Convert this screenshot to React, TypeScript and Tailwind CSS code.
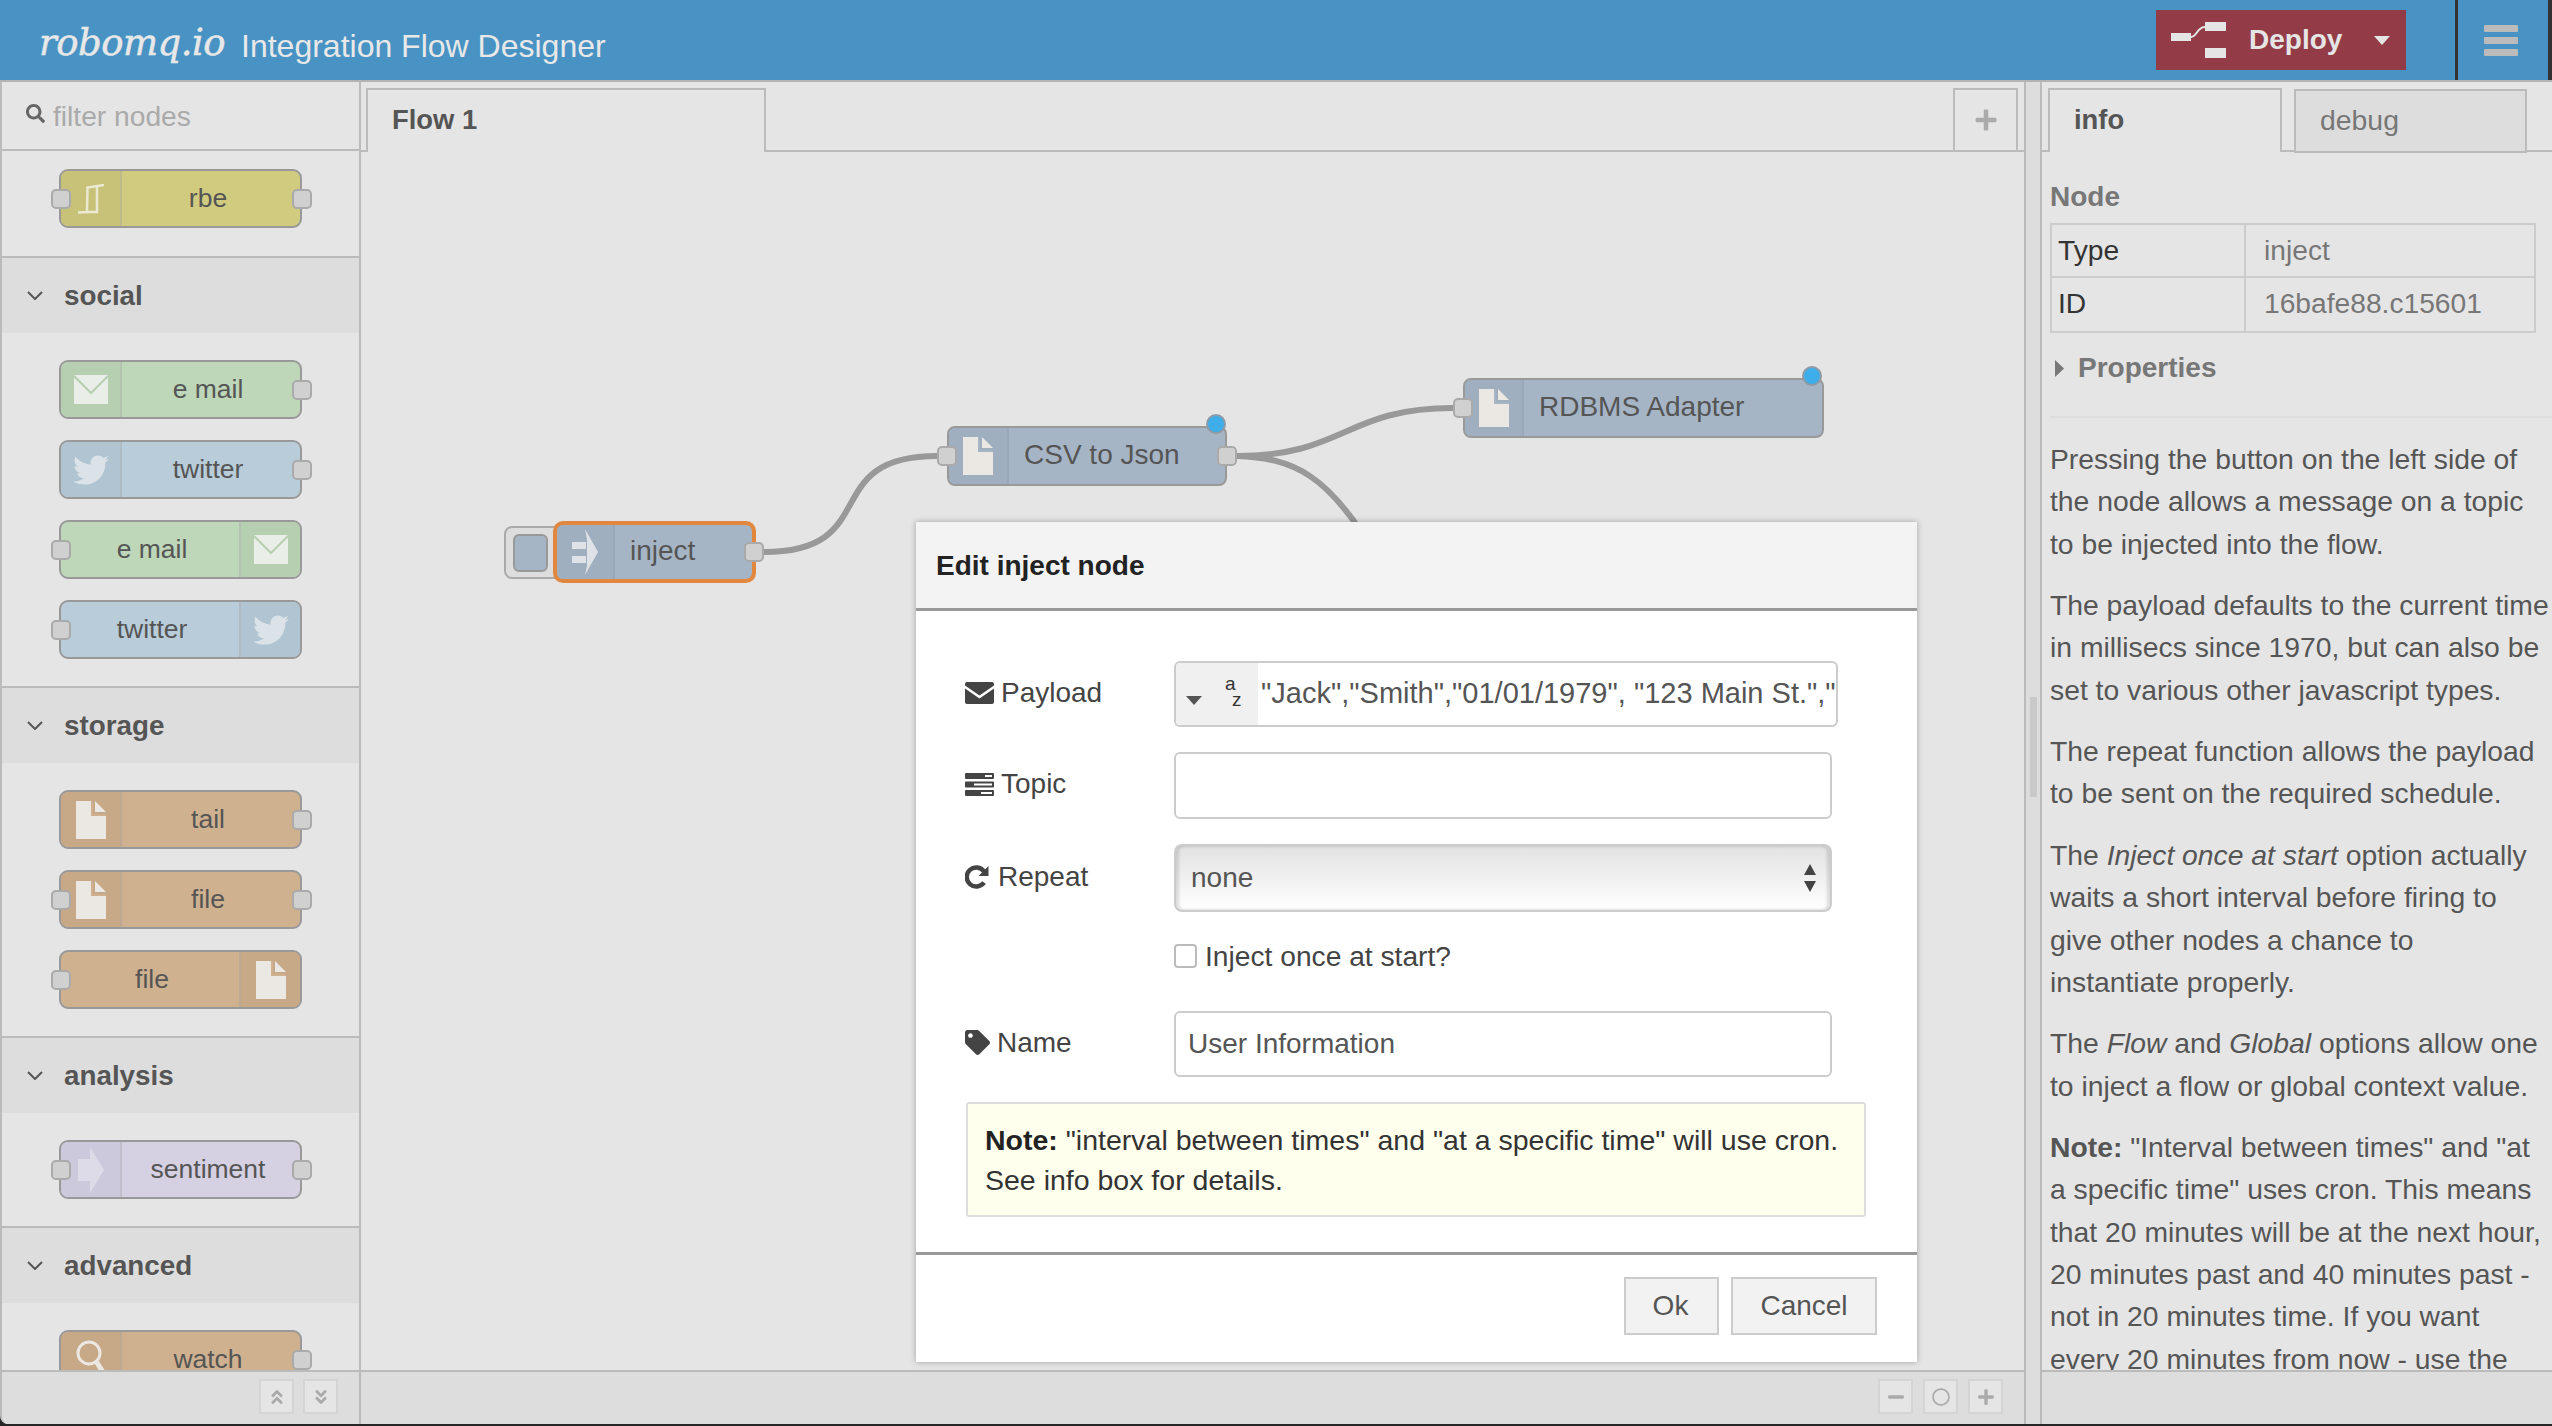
import type { ReactNode } from 'react';
import { FaTag, FaSearch, FaTwitter, FaPlus, FaMinus, FaRegCircle, FaAngleDoubleUp, FaAngleDoubleDown } from 'react-icons/fa';

function MailIcon({ line }: { line: string }) {
  return (
    <svg viewBox="0 0 34 29" className="w-[34px] h-[29px]">
      <rect width="34" height="29" fill="#eaeee8" />
      <path d="M0 1 L17 18 L34 1" fill="none" stroke={line} strokeWidth="2" />
    </svg>
  );
}

function FileIcon({ fold }: { fold: string }) {
  return (
    <svg viewBox="0 0 30 38" className="w-[30px] h-[38px]">
      <path d="M0 0 H16 V14 H30 V38 H0 Z" fill="#ebe8e3" />
      <path d="M19 0 L30 11 H19 Z" fill="#ebe8e3" />
      <path d="M16 0 V14 H30" fill="none" stroke={fold} strokeWidth="2" />
    </svg>
  );
}

function TwitterIcon() {
  return <FaTwitter className="w-[36px] h-[36px] text-[#dbe3e8]" />;
}

function RbeIcon() {
  return (
    <svg viewBox="0 0 26 30" className="w-[26px] h-[30px]">
      <path d="M0 28.5 L9 28 L9.5 3.5 L26 1" fill="none" stroke="#ece9d2" strokeWidth="2.5" />
      <path d="M19 3 V28 H9" fill="none" stroke="#ece9d2" strokeWidth="2.5" />
    </svg>
  );
}

function ArrowIcon({ striped }: { striped?: boolean }) {
  return (
    <svg viewBox="0 0 26 46" className="w-[26px] h-[46px]">
      {striped ? (
        <>
          <path d="M0 13 H14 V20 H0 Z M0 27 H14 V34 H0 Z" fill="#dfe3e7" />
          <path d="M13 0 L26 23 L13 46 L15 37 V10 Z" fill="#dfe3e7" />
        </>
      ) : (
        <path d="M0 12 H12 V0 L26 23 L12 46 V34 H0 Z" fill="#dedbe8" />
      )}
    </svg>
  );
}

function WatchIcon() {
  return (
    <svg viewBox="0 0 30 40" className="w-[30px] h-[40px]">
      <circle cx="13" cy="13" r="11" fill="none" stroke="#ebe8e3" strokeWidth="3" />
      <path d="M20 21 L28 34" stroke="#ebe8e3" strokeWidth="5" />
    </svg>
  );
}

function Port({ side, top = 'top-[18px]' }: { side: 'left' | 'right'; top?: string }) {
  return (
    <div
      className={`absolute ${top} ${side === 'left' ? 'left-[-10px]' : 'right-[-12px]'} w-[20px] h-[20px] rounded-[5px] bg-[#d0d0d0] border-2 border-[#aaaaaa]`}
    />
  );
}

interface PaletteNodeProps {
  label: string;
  color: string;
  iconBg: string;
  icon: ReactNode;
  iconRight?: boolean;
  input?: boolean;
  output?: boolean;
}

function PaletteNode({ label, color, iconBg, icon, iconRight, input, output }: PaletteNodeProps) {
  const iconBox = (
    <div className={`w-[61px] h-full shrink-0 flex items-center justify-center border-[#aaaaaa55] ${iconRight ? 'border-l-2' : 'border-r-2'} ${iconBg}`}>
      {icon}
    </div>
  );
  return (
    <div className={`relative w-[243px] h-[59px] ml-[57px] rounded-[9px] border-2 border-[#999999] ${color}`}>
      <div className="flex h-full overflow-hidden rounded-[7px]">
        {!iconRight && iconBox}
        <div className={`flex-1 text-center text-[26.5px] leading-[54px] text-[#555555] ${iconRight ? 'pl-[4px]' : 'pr-[6px]'}`}>{label}</div>
        {iconRight && iconBox}
      </div>
      {input && <Port side="left" />}
      {output && <Port side="right" />}
    </div>
  );
}

function PaletteHeader({ title }: { title: string }) {
  return (
    <div className="h-[77px] shrink-0 bg-[#dddddd] border-t-2 border-[#bbbbbb] flex items-center">
      <svg viewBox="0 0 16 9" className="w-[16px] h-[9px] ml-[25px]">
        <path d="M1 1 L8 8 L15 1" fill="none" stroke="#555555" strokeWidth="2" />
      </svg>
      <span className="ml-[21px] font-bold text-[27.8px] text-[#555555]">{title}</span>
    </div>
  );
}

const SOCIAL = [
  { label: 'e mail', color: 'bg-[#bfd7b9]', iconBg: 'bg-[#b7cfb1]', icon: <MailIcon line="#b7cfb1" />, output: true },
  { label: 'twitter', color: 'bg-[#b8ccd9]', iconBg: 'bg-[#b0c4d1]', icon: <TwitterIcon />, output: true },
  { label: 'e mail', color: 'bg-[#bfd7b9]', iconBg: 'bg-[#b7cfb1]', icon: <MailIcon line="#b7cfb1" />, input: true, iconRight: true },
  { label: 'twitter', color: 'bg-[#b8ccd9]', iconBg: 'bg-[#b0c4d1]', icon: <TwitterIcon />, input: true, iconRight: true },
];

const STORAGE = [
  { label: 'tail', output: true },
  { label: 'file', input: true, output: true },
  { label: 'file', input: true, iconRight: true },
];

function ToolButton({ children }: { children: ReactNode }) {
  return (
    <div className="w-[35px] h-[35px] flex items-center justify-center border-2 border-[#d4d4d4] bg-[#e5e5e5] text-[#aaaaaa]">
      {children}
    </div>
  );
}

function CanvasNode({ label, className, dividerAt, children }: { label: string; className: string; dividerAt: string; children: ReactNode }) {
  return (
    <div className={`absolute h-[60px] rounded-[8px] border-2 border-[#999999] bg-[#a6b5c5] flex ${className}`}>
      <div className={`${dividerAt} h-full shrink-0 flex items-center justify-center border-r-2 border-[#98a8b8] bg-[#9fafbf] rounded-l-[6px]`}>{children}</div>
      <div className="pl-[15px] text-[28px] leading-[54px] text-[#555555] whitespace-nowrap">{label}</div>
    </div>
  );
}

function FormRow({ icon, label, gap, children }: { icon: ReactNode; label: string; gap: string; children: ReactNode }) {
  return (
    <div className="flex items-center pl-[49px]">
      <div className={`w-[209px] shrink-0 mb-[3px] flex items-center ${gap} text-[28px] text-[#444444]`}>
        {icon}
        <span>{label}</span>
      </div>
      {children}
    </div>
  );
}

function App() {
  return (
    <div className="relative w-[2552px] h-[1426px] overflow-hidden flex flex-col bg-[#262626] font-['Liberation_Sans',Arial,sans-serif] text-[#555555]">
      {/* Header */}
      <header className="h-[82px] shrink-0 bg-[#4893c4] border-b-2 border-[#b3b3b3] flex items-center">
        <span className="w-[200px] ml-[39px] mt-[6px] whitespace-nowrap font-['DejaVu_Serif',serif] italic text-[37px] tracking-[-0.5px] text-[#e8e8e8] [-webkit-text-stroke:0.5px_#e8e8e8]">robomq.io</span>
        <span className="ml-[2px] mt-[12px] text-[32px] text-[#e8e8e8]">Integration Flow Designer</span>
        <div className="ml-auto flex h-full">
          <div className="w-[250px] h-[60px] mt-[10px] bg-[#933c47] flex items-center">
            <svg viewBox="0 0 56 36" className="w-[56px] h-[36px] ml-[15px]">
              <path d="M0 11 H20 V19 H0 Z M34 0 H55 V9 H34 Z M34 26 H55 V36 H34 Z" fill="#e5e5e5" />
              <path d="M20 15 C26 15 26 5 34 5" fill="none" stroke="#e5e5e5" strokeWidth="2" />
            </svg>
            <span className="ml-[22px] font-bold text-[28px] text-[#e5e5e5]">Deploy</span>
            <svg viewBox="0 0 16 9" className="w-[16px] h-[9px] ml-[32px]">
              <path d="M0 0 H16 L8 9 Z" fill="#e5e5e5" />
            </svg>
          </div>
          <div className="w-[3px] h-full ml-[49px] bg-[#333333]" />
          <div className="w-[90px] h-full pr-[4px] flex flex-col items-center justify-center gap-[5px]">
            <div className="w-[34px] h-[7px] rounded-[1px] bg-[#bbbbbb]" />
            <div className="w-[34px] h-[7px] rounded-[1px] bg-[#bbbbbb]" />
            <div className="w-[34px] h-[7px] rounded-[1px] bg-[#bbbbbb]" />
          </div>
          <div className="w-[4px] h-full bg-[#333333]" />
        </div>
      </header>

      <div className="h-[1342px] shrink-0 flex">
        {/* Palette */}
        <aside className="w-[361px] shrink-0 flex flex-col border-l-2 border-r-2 border-[#bbbbbb] bg-[#e5e5e5] rounded-bl-[8px] overflow-hidden">
          <div className="h-[69px] shrink-0 border-b-2 border-[#bbbbbb] flex items-center pl-[24px]">
            <FaSearch className="w-[19px] h-[19px] mt-[-4px] text-[#666666]" />
            <span className="ml-[8px] mt-[2px] text-[28.2px] text-[#aaaaaa]">filter nodes</span>
          </div>
          <div className="flex-1 min-h-0 overflow-hidden">
            <div className="pt-[18px] pb-[28px]">
              <PaletteNode label="rbe" color="bg-[#d1cb7f]" iconBg="bg-[#c8c278]" icon={<RbeIcon />} input output />
            </div>
            <PaletteHeader title="social" />
            <div className="flex flex-col gap-[21px] pt-[27px] pb-[27px]">
              {SOCIAL.map((n, i) => (
                <PaletteNode key={i} {...n} />
              ))}
            </div>
            <PaletteHeader title="storage" />
            <div className="flex flex-col gap-[21px] pt-[27px] pb-[27px]">
              {STORAGE.map((n, i) => (
                <PaletteNode key={i} color="bg-[#cfb18f]" iconBg="bg-[#c7a988]" icon={<FileIcon fold="#cfb18f" />} {...n} />
              ))}
            </div>
            <PaletteHeader title="analysis" />
            <div className="pt-[27px] pb-[27px]">
              <PaletteNode label="sentiment" color="bg-[#d5d1e3]" iconBg="bg-[#cdc9dc]" icon={<ArrowIcon />} input output />
            </div>
            <PaletteHeader title="advanced" />
            <div className="pt-[27px]">
              <PaletteNode label="watch" color="bg-[#cfb18f]" iconBg="bg-[#c7a988]" icon={<WatchIcon />} output />
            </div>
          </div>
          <div className="h-[54px] shrink-0 bg-[#dddddd] border-t-2 border-[#bbbbbb] flex items-center justify-end gap-[9px] pr-[21px] pb-[3px]">
            <ToolButton><FaAngleDoubleUp className="w-[18px] h-[18px]" /></ToolButton>
            <ToolButton><FaAngleDoubleDown className="w-[18px] h-[18px]" /></ToolButton>
          </div>
        </aside>

        {/* Workspace */}
        <main className="w-[1665px] shrink-0 flex flex-col border-r-2 border-[#bbbbbb] bg-[#e5e5e5]">
          <div className="h-[70px] shrink-0 border-b-2 border-[#bbbbbb] flex items-end pl-[5px]">
            <div className="w-[400px] h-[64px] mb-[-2px] bg-[#e5e5e5] border-2 border-b-0 border-[#bbbbbb] pl-[24px] text-[27.4px] leading-[60px] font-bold text-[#555555]">Flow 1</div>
            <div className="ml-auto mr-[6px] w-[65px] h-[62px] border-2 border-b-0 border-[#bbbbbb] flex items-center justify-center">
              <FaPlus className="w-[24px] h-[24px] text-[#aaaaaa]" />
            </div>
          </div>
          <div className="relative flex-1 min-h-0">
            <svg className="absolute left-0 top-0 w-[1662px] h-[1218px]" viewBox="0 0 1662 1218" fill="none">
              <path d="M403 400 C523 400 456 304 576 304" stroke="#999999" strokeWidth="6" />
              <path d="M876 304 C984 304 984 256 1092 256" stroke="#999999" strokeWidth="6" />
              <path d="M876 304 C932 306 968 322 1016 405" stroke="#999999" strokeWidth="6" />
            </svg>

            {/* inject */}
            <div className="absolute left-[143px] top-[374px] w-[70px] h-[53px] rounded-[8px] border-2 border-[#aaaaaa] bg-[#dddddd]">
              <div className="ml-[7px] mt-[6px] w-[35px] h-[38px] rounded-[6px] border-2 border-[#999999] bg-[#a6b5c5]" />
            </div>
            <div className="absolute left-[192px] top-[369px] w-[203px] h-[62px] rounded-[10px] border-4 border-[#e2873e] bg-[#a6b5c5] flex">
              <div className="w-[58px] h-full shrink-0 flex items-center justify-center border-r-2 border-[#98a8b8] bg-[#9fafbf] rounded-l-[6px]"><ArrowIcon striped /></div>
              <div className="pl-[15px] text-[28px] leading-[52px] text-[#555555]">inject</div>
            </div>
            <div className="absolute left-[383px] top-[390px] w-[20px] h-[20px] rounded-[5px] bg-[#d0d0d0] border-2 border-[#aaaaaa]" />

            {/* csv to json */}
            <CanvasNode label="CSV to Json" className="left-[586px] top-[274px] w-[280px]" dividerAt="w-[60px]">
              <FileIcon fold="#a6b5c5" />
            </CanvasNode>
            <div className="absolute left-[576px] top-[294px] w-[20px] h-[20px] rounded-[5px] bg-[#d0d0d0] border-2 border-[#aaaaaa]" />
            <div className="absolute left-[856px] top-[294px] w-[20px] h-[20px] rounded-[5px] bg-[#d0d0d0] border-2 border-[#aaaaaa]" />
            <div className="absolute left-[845px] top-[262px] w-[20px] h-[20px] rounded-full bg-[#3daee9] border-2 border-[#8f9aa5]" />

            {/* rdbms adapter */}
            <CanvasNode label="RDBMS Adapter" className="left-[1102px] top-[226px] w-[361px]" dividerAt="w-[59px]">
              <FileIcon fold="#a6b5c5" />
            </CanvasNode>
            <div className="absolute left-[1092px] top-[246px] w-[20px] h-[20px] rounded-[5px] bg-[#d0d0d0] border-2 border-[#aaaaaa]" />
            <div className="absolute left-[1441px] top-[214px] w-[20px] h-[20px] rounded-full bg-[#3daee9] border-2 border-[#8f9aa5]" />

            {/* Edit dialog */}
            <div className="absolute left-[555px] top-[370px] w-[1001px] h-[840px] bg-white shadow-[0_0_6px_rgba(0,0,0,0.3)] flex flex-col">
              <div className="h-[89px] shrink-0 bg-[#f3f3f3] border-b-[3px] border-[#999999] pl-[20px] font-bold text-[28px] leading-[88px] text-[#222222]">Edit inject node</div>
              <div className="flex-1 flex flex-col pt-[50px]">
                <FormRow
                  icon={
                    <svg viewBox="0 0 29 22" className="w-[29px] h-[22px]">
                      <path d="M2 0 H27 Q29 0 29 2 V3.5 L14.5 13.5 L0 3.5 V2 Q0 0 2 0 Z M0 6.5 L14.5 16.5 L29 6.5 V20 Q29 22 27 22 H2 Q0 22 0 20 Z" fill="#444444" />
                    </svg>
                  }
                  label="Payload"
                  gap="gap-[7px]"
                >
                  <div className="w-[664px] h-[66px] rounded-[6px] border-2 border-[#cccccc] flex overflow-hidden">
                    <div className="relative w-[82px] h-full shrink-0 bg-[#f0f0f0]">
                      <svg viewBox="0 0 16 9" className="absolute left-[10px] top-[33px] w-[16px] h-[9px]">
                        <path d="M0 0 H16 L8 9 Z" fill="#555555" />
                      </svg>
                      <span className="absolute left-[49px] top-[11px] text-[19px] leading-[20px] text-[#333333]">a</span>
                      <span className="absolute left-[56px] top-[27px] text-[19px] leading-[20px] text-[#333333]">z</span>
                    </div>
                    <div className="pl-[3px] whitespace-nowrap text-[29px] leading-[60px] text-[#555555]">"Jack","Smith","01/01/1979", "123 Main St.","</div>
                  </div>
                </FormRow>
                <div className="mt-[25px]">
                  <FormRow
                    icon={
                      <svg viewBox="0 0 29 23" className="w-[29px] h-[23px]">
                        <path d="M1 0 H28 Q29 0 29 1 V5 Q29 6 28 6 H1 Q0 6 0 5 V1 Q0 0 1 0 Z M1 8.5 H28 Q29 8.5 29 9.5 V13.5 Q29 14.5 28 14.5 H1 Q0 14.5 0 13.5 V9.5 Q0 8.5 1 8.5 Z M1 17 H28 Q29 17 29 18 V22 Q29 23 28 23 H1 Q0 23 0 22 V18 Q0 17 1 17 Z" fill="#444444" />
                        <path d="M20 2 H27 V4 H20 Z M9 10.5 H27 V12.5 H9 Z M16 19 H27 V21 H16 Z" fill="#ffffff" />
                      </svg>
                    }
                    label="Topic"
                    gap="gap-[7px]"
                  >
                    <div className="w-[658px] h-[67px] rounded-[6px] border-2 border-[#cccccc]" />
                  </FormRow>
                </div>
                <div className="mt-[25px]">
                  <FormRow
                    icon={
                      <svg viewBox="0 0 24 24" className="w-[24px] h-[24px]">
                        <path d="M19 17.5 A9.5 9.5 0 1 1 19 6.5" fill="none" stroke="#444444" strokeWidth="4.5" />
                        <path d="M23.5 1 V11 H13.5 Z" fill="#444444" />
                      </svg>
                    }
                    label="Repeat"
                    gap="gap-[9px]"
                  >
                    <div className="w-[658px] h-[68px] rounded-[8px] border-2 border-[#cccccc] bg-gradient-to-b from-[#e2e2e2] to-white shadow-[inset_3px_0_3px_rgba(0,0,0,0.12),inset_-3px_0_3px_rgba(0,0,0,0.12)] flex items-center justify-between pl-[15px] pr-[13px] text-[28px] text-[#555555]">
                      <span>none</span>
                      <svg viewBox="0 0 14 28" className="w-[14px] h-[28px]">
                        <path d="M7 0 L13 11 H1 Z M7 28 L13 17 H1 Z" fill="#444444" />
                      </svg>
                    </div>
                  </FormRow>
                </div>
                <div className="mt-[32px] ml-[258px] flex items-center h-[24px] text-[28.2px] text-[#444444]">
                  <div className="w-[23px] h-[24px] rounded-[4px] border-2 border-[#bbbbbb] bg-white" />
                  <span className="ml-[8px]">Inject once at start?</span>
                </div>
                <div className="mt-[43px]">
                  <FormRow icon={<FaTag className="w-[25px] h-[25px] text-[#444444]" />} label="Name" gap="gap-[7px]">
                    <div className="w-[658px] h-[66px] rounded-[6px] border-2 border-[#cccccc] pl-[12px] text-[28px] leading-[62px] text-[#555555]">User Information</div>
                  </FormRow>
                </div>
                <div className="mt-[25px] ml-[50px] w-[900px] h-[115px] rounded-[3px] border-2 border-[#dddddd] bg-[#ffffee] pl-[17px] pt-[16px] text-[28.5px] leading-[40px] text-[#333333]">
                  <div><b className="text-[#222222]">Note:</b> "interval between times" and "at a specific time" will use cron.</div>
                  <div>See info box for details.</div>
                </div>
              </div>
              <div className="h-[110px] shrink-0 border-t-[3px] border-[#999999] flex justify-end gap-[12px] pt-[22px] pr-[40px]">
                <div className="w-[95px] h-[58px] bg-[#f2f2f2] border-2 border-[#cccccc] pr-[2px] text-center text-[28px] leading-[54px] text-[#555555]">Ok</div>
                <div className="w-[146px] h-[58px] bg-[#f2f2f2] border-2 border-[#cccccc] text-center text-[28px] leading-[54px] text-[#555555]">Cancel</div>
              </div>
            </div>
          </div>
          <div className="relative z-10 h-[54px] shrink-0 bg-[#dddddd] border-t-2 border-[#bbbbbb] flex items-center justify-end gap-[10px] pr-[21px] pb-[3px]">
            <ToolButton><FaMinus className="w-[18px] h-[18px]" /></ToolButton>
            <ToolButton><FaRegCircle className="w-[18px] h-[18px]" /></ToolButton>
            <ToolButton><FaPlus className="w-[18px] h-[18px]" /></ToolButton>
          </div>
        </main>

        {/* Separator */}
        <div className="w-[14px] shrink-0 bg-[#dddddd] flex items-center justify-center pb-[12px]">
          <div className="w-[7px] h-[100px] bg-[#c9c9c9]" />
        </div>

        {/* Sidebar */}
        <aside className="flex-1 min-w-0 flex flex-col border-l-2 border-[#bbbbbb] bg-[#e5e5e5]">
          <div className="h-[70px] shrink-0 border-b-2 border-[#bbbbbb] flex items-end pl-[6px]">
            <div className="w-[234px] h-[64px] mb-[-2px] bg-[#e5e5e5] border-2 border-b-0 border-[#bbbbbb] pl-[24px] text-[27.4px] leading-[60px] font-bold text-[#555555]">info</div>
            <div className="ml-[12px] w-[233px] h-[64px] mb-[-3px] bg-[#dddddd] border-2 border-[#bbbbbb] pl-[24px] text-[28.4px] leading-[58px] text-[#777777]">debug</div>
          </div>
          <div className="flex-1 min-h-0 overflow-hidden pl-[8px]">
            <div className="mt-[28px] font-bold text-[28px] leading-[34px] text-[#777777]">Node</div>
            <div className="mt-[9px] w-[486px] border-2 border-[#cccccc] text-[28.2px]">
              <div className="flex h-[53px] border-b-2 border-[#cccccc]">
                <div className="w-[194px] border-r-2 border-[#cccccc] pl-[6px] leading-[50px] text-[#333333]">Type</div>
                <div className="pl-[18px] leading-[50px] text-[#777777]">inject</div>
              </div>
              <div className="flex h-[53px]">
                <div className="w-[194px] border-r-2 border-[#cccccc] pl-[6px] leading-[50px] text-[#333333]">ID</div>
                <div className="pl-[18px] leading-[50px] text-[#777777]">16bafe88.c15601</div>
              </div>
            </div>
            <div className="mt-[18px] flex items-center font-bold text-[28px] leading-[34px] text-[#777777]">
              <svg viewBox="0 0 9 17" className="w-[9px] h-[17px] ml-[5px]">
                <path d="M0 0 L9 8.5 L0 17 Z" fill="#777777" />
              </svg>
              <span className="ml-[14px]">Properties</span>
            </div>
            <div className="mt-[31px] h-[2px] bg-[#dddddd]" />
            <div className="mt-[20px] text-[28.3px] leading-[42.3px] text-[#555555] whitespace-nowrap flex flex-col gap-[19.2px]">
              <p>Pressing the button on the left side of<br />the node allows a message on a topic<br />to be injected into the flow.</p>
              <p>The payload defaults to the current time<br />in millisecs since 1970, but can also be<br />set to various other javascript types.</p>
              <p>The repeat function allows the payload<br />to be sent on the required schedule.</p>
              <p>The <i>Inject once at start</i> option actually<br />waits a short interval before firing to<br />give other nodes a chance to<br />instantiate properly.</p>
              <p>The <i>Flow</i> and <i>Global</i> options allow one<br />to inject a flow or global context value.</p>
              <p><b>Note:</b> "Interval between times" and "at<br />a specific time" uses cron. This means<br />that 20 minutes will be at the next hour,<br />20 minutes past and 40 minutes past -<br />not in 20 minutes time. If you want<br />every 20 minutes from now - use the</p>
            </div>
          </div>
          <div className="h-[54px] shrink-0 bg-[#dddddd] border-t-2 border-[#bbbbbb]" />
        </aside>
      </div>
    </div>
  );
}

export default App;
